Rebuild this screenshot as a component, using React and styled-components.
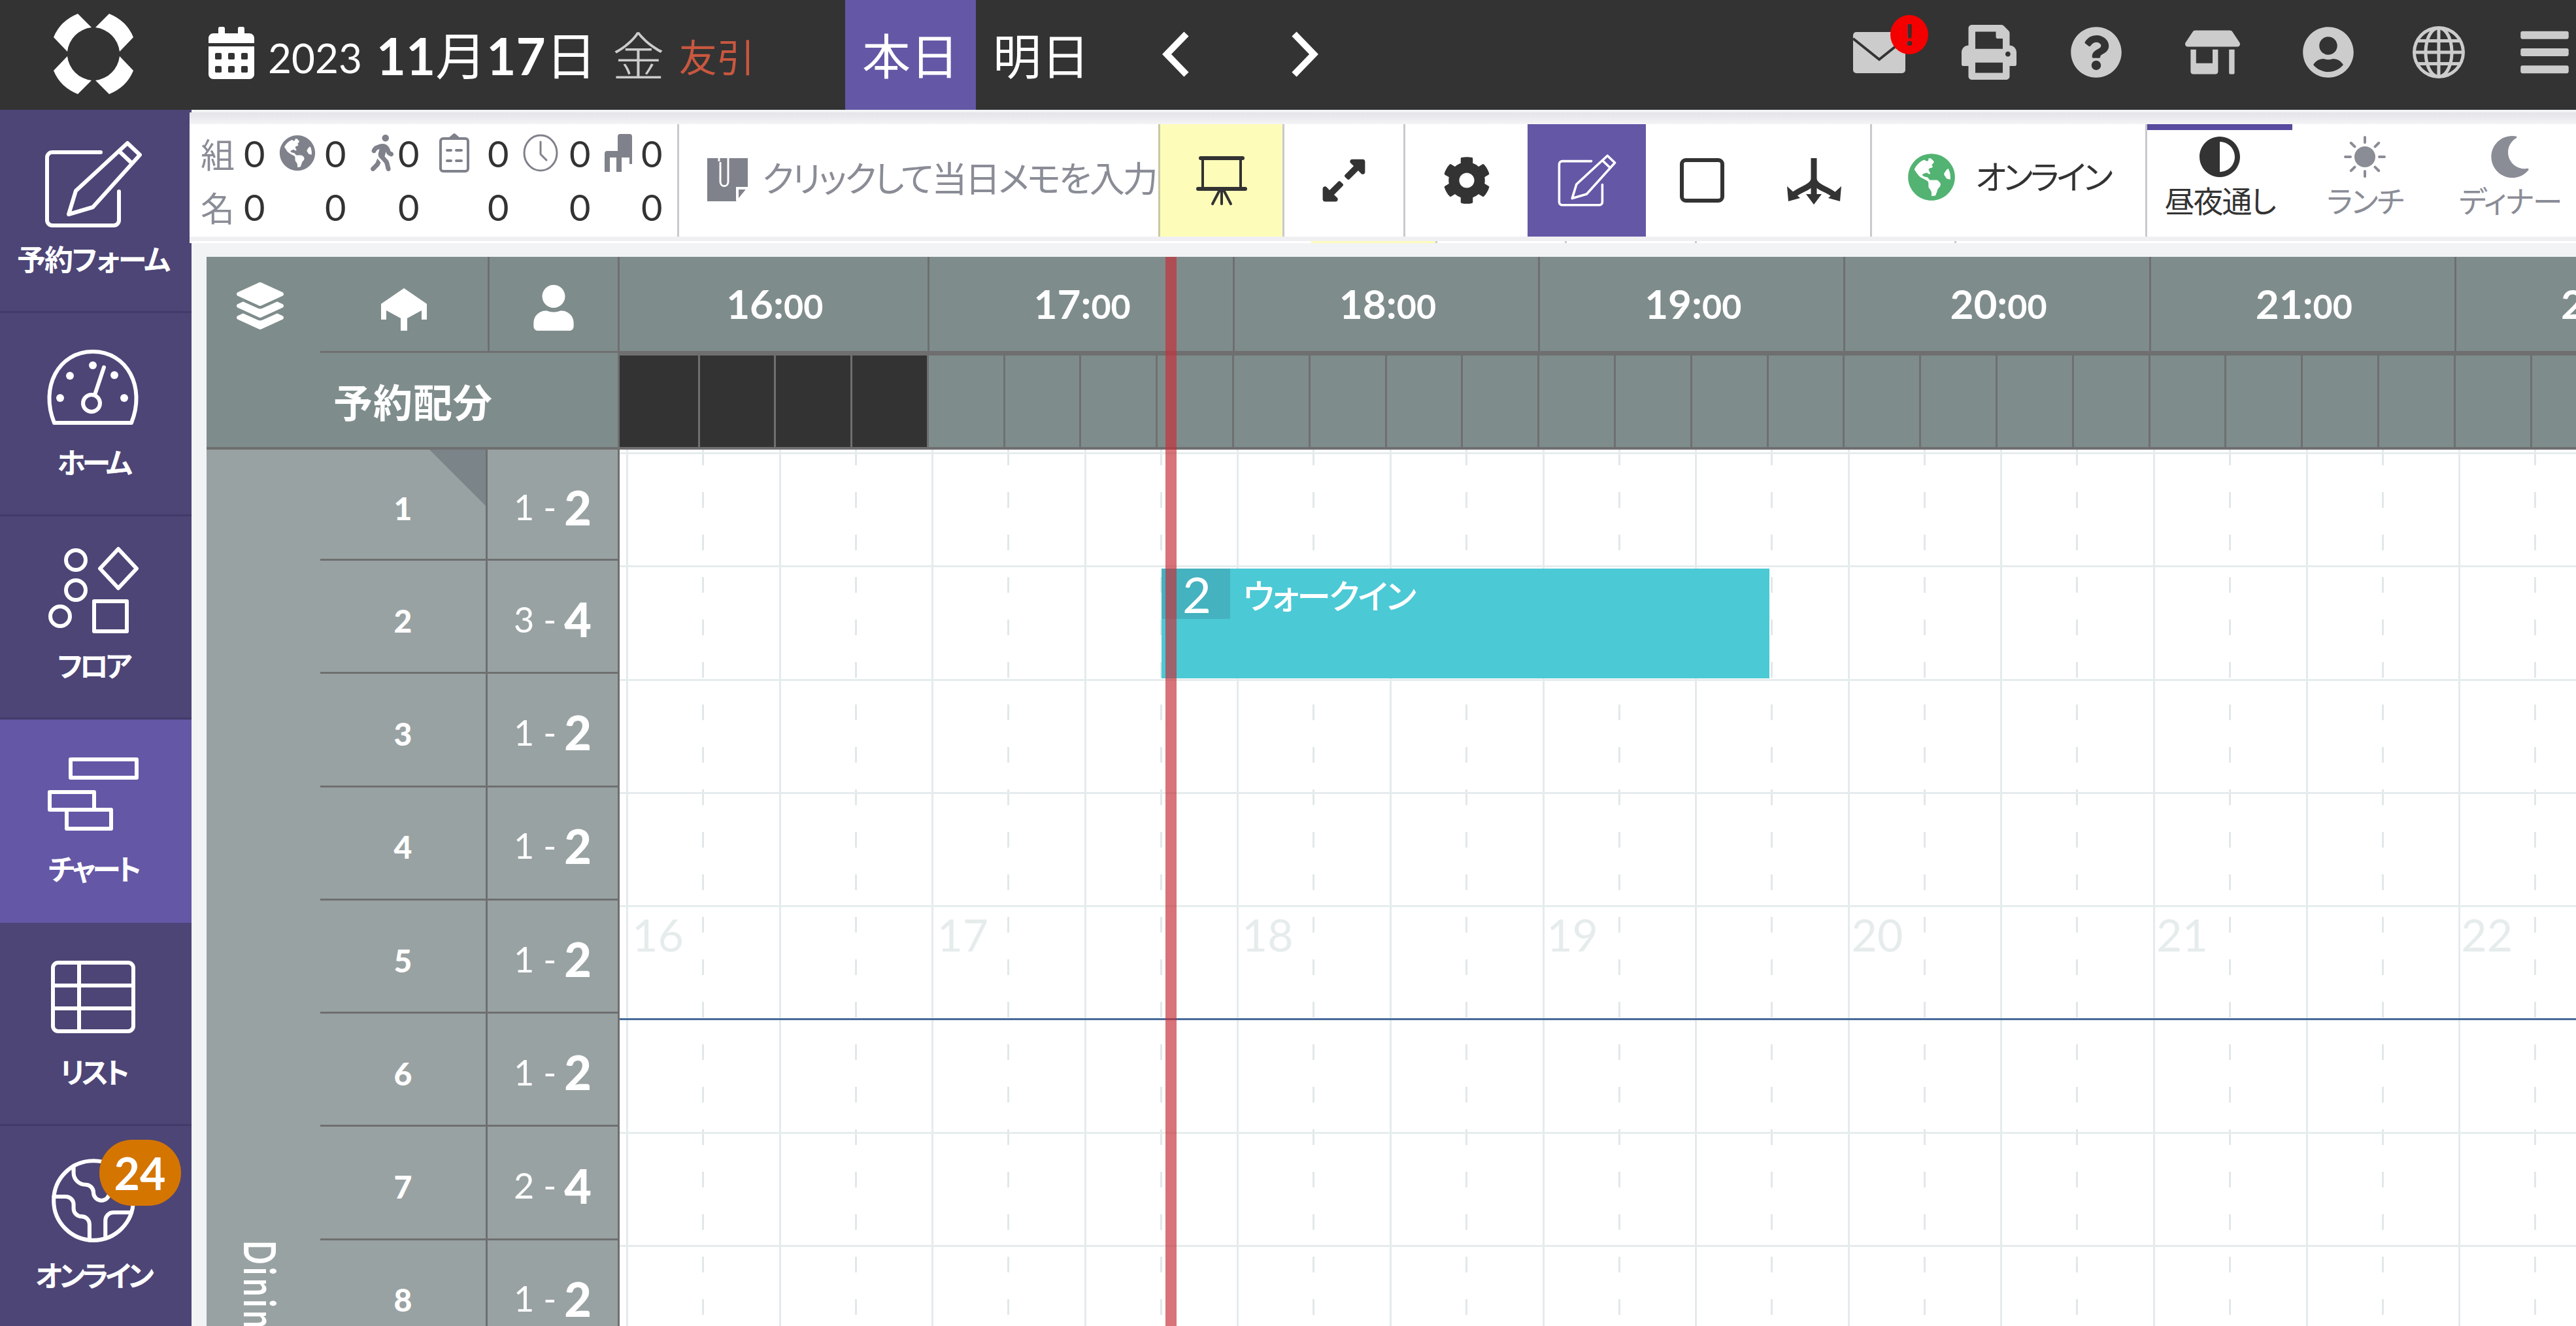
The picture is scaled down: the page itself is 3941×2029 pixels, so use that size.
import React from "react";
import styled, { createGlobalStyle } from "styled-components";
import {
  FaCalendarAlt, FaPrint, FaQuestionCircle, FaStoreAlt, FaUserCircle, FaBars,
  FaGlobeAmericas, FaWalking, FaExpandAlt, FaCog,
  FaAdjust, FaMoon, FaLayerGroup, FaUser,
} from "react-icons/fa";
import { BsGlobe, BsSunFill } from "react-icons/bs";
import { Earth } from "lucide-react";

const GlobalStyle = createGlobalStyle`
  html, body { margin: 0; padding: 0; background: #f2f3f5; }
  * { box-sizing: border-box; }
  body { font-family: "Lato", "Noto Sans CJK JP", sans-serif; font-feature-settings: "palt"; }
`;

const Page = styled.div`
  width: 3941px;
  height: 2029px;
  overflow: hidden;
  display: flex;
  flex-direction: column;
`;

/* top bar */
const TopBar = styled.header`
  height: 168px;
  flex: none;
  background: #333;
  color: #fff;
  display: flex;
  align-items: center;
`;
const Logo = styled.svg`
  width: 122px;
  height: 123px;
  margin: 0 110px 3px 82px;
  flex: none;
`;
const DateBlock = styled.div`
  display: flex;
  align-items: center;
  width: 979px;
  flex: none;
  padding: 0 0 6px 0;
  svg { font-size: 80px; margin-right: 16px; }
`;
const Year = styled.span`
  font-size: 62px;
  margin: 14px 22px 0 0;
`;
const MonthDay = styled.span`
  font-size: 78px;
  margin-right: 24px;
  b { font-weight: 700; }
`;
const Weekday = styled.span`
  font-size: 80px;
  font-weight: 300;
  color: #ccc;
  margin-right: 22px;
`;
const Rokuyo = styled.span`
  font-size: 58px;
  color: #c9573f;
  margin-top: 8px;
`;
const DayTab = styled.div`
  height: 168px;
  width: ${(p) => p.$w}px;
  background: ${(p) => (p.$active ? "#6457a6" : "transparent")};
  font-size: 74px;
  padding-bottom: 6px;
  display: flex;
  align-items: center;
  justify-content: center;
  flex: none;
`;
const Chevron = styled.svg`
  width: 44px;
  height: 70px;
  flex: none;
  margin-left: ${(p) => p.$ml}px;
  margin-bottom: 3px;
`;
const TopIcons = styled.div`
  margin-left: auto;
  padding: 0 8px 8px 0;
  display: flex;
  align-items: center;
  color: #ccc;
`;
const TopIcon = styled.div`
  width: 80px;
  margin-left: ${(p) => p.$gap}px;
  display: flex;
  justify-content: center;
  position: relative;
  font-size: ${(p) => p.$size}px;
  svg { display: block; flex: none; }
`;
const AlertBadge = styled.span`
  position: absolute;
  top: -26px;
  left: 57px;
  width: 58px;
  height: 60px;
  border-radius: 50%;
  background: #f40000;
  color: #333;
  font-size: 46px;
  font-weight: 900;
  line-height: 60px;
  text-align: center;
`;

/* body */
const Body = styled.div`
  flex: 1;
  display: flex;
  min-height: 0;
`;
const Sidebar = styled.nav`
  width: 293px;
  flex: none;
  background: #4d4576;
  color: #fff;
`;
const SideItem = styled.div`
  height: 311px;
  padding: 20px 8px 0 0;
  display: flex;
  flex-direction: column;
  align-items: center;
  background: ${(p) => (p.$active ? "#6457a6" : "transparent")};
  border-bottom: 3px solid ${(p) => (p.$active ? "#6457a6" : "#423b69")};
`;
const SideIconSlot = styled.div`
  height: 187px;
  display: flex;
  align-items: center;
  justify-content: center;
  position: relative;
`;
const SideLabel = styled.div`
  font-size: 44px;
  line-height: 44px;
  font-weight: 700;
  letter-spacing: ${(p) => p.$tracking ?? -5}px;
  white-space: nowrap;
`;
const CountBadge = styled.span`
  position: absolute;
  top: 1px;
  left: 82px;
  width: 125px;
  height: 101px;
  border-radius: 50px;
  background: #d47500;
  color: #fff;
  font-size: 68px;
  font-weight: 700;
  display: flex;
  align-items: center;
  justify-content: center;
`;

const Main = styled.main`
  flex: 1;
  min-width: 0;
  display: flex;
  flex-direction: column;
  padding-top: 4px;
`;

/* toolbar */
const Toolbar = styled.div`
  margin-left: -3px;
  height: 197px;
  flex: none;
  padding: 18px 0 7px;
  background: linear-gradient(to bottom, #e4e4e9, #f4f4f6 18px, #fff 18px, #fff 190px, #f0f0f3 190px);
  display: flex;
  color: #333;
`;
const Stats = styled.div`
  width: 746px;
  flex: none;
  padding: 3px 0 0 17px;
  display: grid;
  grid-template-columns: 66px 54px 70px 63px 49px 63px 74px 54px 71px 54px 56px 55px;
  grid-auto-rows: 82px;
  align-items: center;
  font-size: 56px;
  background: #fff;
`;
const StatLabel = styled.span`
  font-size: 52px;
  color: #8a8c96;
`;
const StatIcon = styled.span`
  font-size: 56px;
  color: #7f818b;
  display: flex;
  svg { display: block; }
`;
const Memo = styled.div`
  width: 736px;
  flex: none;
  border-left: 3px solid #c9c9ce;
  padding: 42px 0 0 43px;
  display: flex;
  gap: 22px;
  color: #8a8c96;
  font-size: 54px;
  line-height: 64px;
  white-space: nowrap;
  letter-spacing: -3px;
  span { margin-top: 10px; }
`;
const ToolButton = styled.div`
  width: ${(p) => p.$w}px;
  flex: none;
  display: flex;
  align-items: center;
  justify-content: center;
  font-size: 74px;
  background: ${(p) => p.$bg || "#fff"};
  color: ${(p) => p.$color || "#333"};
  border-left: ${(p) => (p.$line ? `3px solid ${p.$line}` : "none")};
  svg { display: block; }
`;
const OnlineButton = styled.div`
  width: 421px;
  flex: none;
  border-left: 3px solid #c9c9ce;
  padding: 44px 0 0 54px;
  display: flex;
  gap: 30px;
  font-size: 51px;
  line-height: 64px;
  letter-spacing: -4px;
  white-space: nowrap;
  svg { font-size: 74px; color: #52b372; flex: none; }
  span { margin-top: 5px; }
`;
const MealTab = styled.div`
  width: 222px;
  flex: none;
  display: flex;
  flex-direction: column;
  align-items: center;
  padding-top: 9px;
  gap: 10px;
  font-size: 46px;
  line-height: 52px;
  letter-spacing: -2px;
  white-space: nowrap;
  color: ${(p) => (p.$active ? "#333" : "#8a8c96")};
  border-top: ${(p) => (p.$active ? "9px solid #584a9e" : "9px solid transparent")};
  svg { font-size: 64px; display: block; }
`;
const MealLine = styled.div`
  width: 3px;
  flex: none;
  background: #c9c9ce;
`;
const ToolbarEcho = styled.div`
  margin-left: -3px;
  height: 3px;
  flex: none;
  background: #fff;
  padding-left: 1716px;
  display: flex;
`;
const EchoCell = styled.div`
  flex: 0 0 ${(p) => p.$w}px;
  background: ${(p) => p.$bg || "transparent"};
  border-right: 3px solid #c9c9ce;
`;

/* table */
const TableWrap = styled.section`
  position: relative;
  margin: 21px 0 0 23px;
  flex: 1;
  min-height: 0;
  overflow: hidden;
  display: flex;
  flex-direction: column;
`;
const Head = styled.div`
  height: 295px;
  flex: none;
  display: flex;
  background: #7f8c8c;
  color: #fff;
  border-bottom: 4px solid #6f6f6f;
`;
const HeadLeft = styled.div`
  width: 632px;
  flex: none;
  border-right: 3px solid #6f6f6f;
  display: grid;
  grid-template-columns: 174px 256px 1fr;
  grid-template-rows: 147px 1fr;
`;
const HeadCell = styled.div`
  display: flex;
  align-items: center;
  justify-content: center;
  padding-top: ${(p) => p.$pt || 0}px;
  font-size: ${(p) => p.$size || 62}px;
  border-left: ${(p) => (p.$divider ? "3px solid #6f6f6f" : "none")};
  border-bottom: ${(p) => (p.$under ? "3px solid #6f6f6f" : "none")};
  svg { display: block; }
`;
const LayerCell = styled(HeadCell)`
  grid-row: 1 / span 2;
  align-items: flex-start;
  padding: 39px 10px 0 0;
  font-size: 72px;
`;
const AllotLabel = styled.div`
  grid-column: 2 / span 2;
  display: flex;
  align-items: center;
  padding-left: 20px;
  font-size: 60px;
  font-weight: 700;
  letter-spacing: 1px;
`;
const HeadTimes = styled.div`
  flex: 1;
  min-width: 0;
  display: flex;
  flex-direction: column;
`;
const HourRow = styled.div`
  height: 151px;
  flex: none;
  display: flex;
  border-bottom: 7px solid #6f6f6f;
`;
const HourCell = styled.div`
  flex: 0 0 ${(p) => (p.$first ? 473.5 : 467.3)}px;
  border-right: 3px solid #6f6f6f;
  display: flex;
  align-items: baseline;
  justify-content: center;
  padding: 34px 0 0 4px;
  font-size: 62px;
  font-weight: 700;
  white-space: nowrap;
  small { font-size: 52px; font-weight: 700; }
`;
const SlotRow = styled.div`
  flex: 1;
  display: flex;
`;
const Slot = styled.div`
  flex: 0 0 ${(p) => (p.$first ? 122.5 : 116.8)}px;
  background: ${(p) => (p.$closed ? "#333" : "transparent")};
  border-right: 3px solid #6f6f6f;
`;
const TableBody = styled.div`
  flex: 1;
  display: flex;
  min-height: 0;
`;
const GroupCol = styled.div`
  width: 174px;
  flex: none;
  background: #99a2a2;
  padding: 1210px 0 0 47px;
  color: #fff;
`;
const GroupName = styled.div`
  writing-mode: vertical-rl;
  font-size: 48px;
  font-weight: 700;
  line-height: 50px;
  letter-spacing: 5px;
  white-space: nowrap;
  transform: scaleX(1.4);
  transform-origin: left top;
`;
const HeadRows = styled.div`
  width: 458px;
  flex: none;
  border-right: 3px solid #6f6f6f;
  background: #99a2a2;
  color: #fff;
`;
const TableRow = styled.div`
  height: ${(p) => (p.$first ? 170 : 173.3)}px;
  display: flex;
  border-bottom: 3px solid #6f6f6f;
`;
const TableNo = styled.div`
  position: relative;
  width: 256px;
  flex: none;
  border-right: 3px solid #6f6f6f;
  display: flex;
  align-items: center;
  justify-content: center;
  padding-top: 12px;
  font-size: 48px;
  font-weight: 900;
  &::after {
    content: "";
    display: ${(p) => (p.$marked ? "block" : "none")};
    position: absolute;
    top: 0;
    right: 0;
    width: 86px;
    height: 86px;
    background: #7b8489;
    clip-path: polygon(0 0, 100% 0, 100% 100%);
  }
`;
const Capacity = styled.div`
  flex: 1;
  display: flex;
  align-items: center;
  justify-content: center;
  padding-top: 8px;
  gap: 12px;
  font-size: 54px;
  b { font-size: 72px; font-weight: 900; }
`;

const TimeGrid = styled.div`
  position: relative;
  flex: 1;
  min-width: 0;
  background: #fff;
  padding-top: 4px;
  overflow: hidden;
`;
const GridColumns = styled.div`
  position: absolute;
  inset: 0;
  padding-left: 10px;
  display: flex;
`;
const GridColumn = styled.div`
  position: relative;
  flex: 0 0 233.6px;
  border-left: 3px solid #e4ebed;
  &::after {
    content: "";
    position: absolute;
    top: 0;
    bottom: 0;
    left: 113px;
    width: 3px;
    background: repeating-linear-gradient(to bottom, #e1e8ea 0 24px, transparent 24px 65px);
  }
`;
const GridRow = styled.div`
  position: relative;
  height: 173.3px;
  border-top: 3px solid ${(p) => (p.$accent ? "#476a9c" : "#e6eced")};
`;
const Watermarks = styled.div`
  position: absolute;
  top: 702px;
  left: 19px;
  display: flex;
  color: #e6ecec;
  font-size: 68px;
  line-height: 80px;
`;
const Watermark = styled.span`
  flex: 0 0 466.4px;
`;
const Booking = styled.div`
  position: absolute;
  top: 182px;
  left: 829px;
  width: 930px;
  height: 168px;
  background: #4bc9d5;
  color: #fff;
  display: flex;
  align-items: flex-start;
`;
const PartySize = styled.div`
  width: 105px;
  height: 77px;
  flex: none;
  background: #44b2bf;
  font-size: 76px;
  font-weight: 400;
  line-height: 77px;
  padding-left: 32px;
`;
const GuestName = styled.div`
  font-size: 52px;
  font-weight: 500;
  line-height: 84px;
  margin-left: 20px;
  letter-spacing: -2.5px;
`;
const NowLine = styled.div`
  position: absolute;
  top: 0;
  bottom: 0;
  left: 1467px;
  width: 17px;
  background: rgba(196, 48, 58, 0.68);
`;

/* drawn icons */
const Line = styled.svg`
  fill: none;
  stroke: currentColor;
  stroke-width: ${(p) => p.$sw || 6}px;
  stroke-linejoin: round;
  stroke-linecap: round;
  display: block;
  overflow: visible;
`;

const EditIcon = ({ w, h, sw }) => (
  <Line $sw={sw} width={w} height={h} viewBox="0 0 146 130">
    <path d="M84 16H10a8 8 0 0 0-8 8v96a8 8 0 0 0 8 8h94a8 8 0 0 0 8-8V76" />
    <path d="M125 2l19 18-72 80-37 11 11-36z" />
    <path d="M113 15l19 18" />
  </Line>
);
const GaugeIcon = () => (
  <Line width="147" height="115" viewBox="0 0 147 115">
    <path d="M14 112C-8 58 20 3 73 3c53 0 81 55 59 109z" />
    <circle cx="71" cy="82" r="13" />
    <path d="M76 69L90 27" />
    {[[23, 74], [38, 40], [73, 24], [106, 39], [121, 74]].map(([cx, cy]) => (
      <circle key={cx} cx={cx} cy={cy} r="6" fill="currentColor" stroke="none" />
    ))}
  </Line>
);
const FloorIcon = () => (
  <Line width="137" height="131" viewBox="0 0 137 131">
    <circle cx="42" cy="19" r="15" />
    <circle cx="42" cy="65" r="15" />
    <circle cx="18" cy="105" r="15" />
    <path d="M107 2l28 30-28 30-28-30z" />
    <rect x="70" y="82" width="50" height="46" />
  </Line>
);
const ChartIcon = () => (
  <Line width="137" height="110" viewBox="0 0 137 110">
    <rect x="34" y="2" width="101" height="28" />
    <rect x="2" y="52" width="68" height="27" />
    <rect x="28" y="79" width="68" height="29" />
  </Line>
);
const ListIcon = () => (
  <Line width="129" height="111" viewBox="0 0 129 111">
    <rect x="3" y="3" width="123" height="105" rx="8" />
    <path d="M3 38h123M3 73h123M43 3v105" />
  </Line>
);
const ChartBoardIcon = () => (
  <Line $sw={4} width="76" height="75" viewBox="0 0 76 75">
    <path d="M6 3h64" strokeWidth="6" />
    <path d="M9 3v46M67 3v46" />
    <path d="M2 50h72" strokeWidth="6" />
    <path d="M36 50L24 73M38 50v23M40 50l12 23" />
  </Line>
);
const SplitIcon = () => (
  <Line $sw={9} width="83" height="75" viewBox="0 0 83 75">
    <path d="M41 3v56" strokeLinecap="butt" />
    <path d="M41 36C38 48 20 50 9 60M41 36c3 12 21 14 32 24" />
    <path d="M29 58h24L41 74z" fill="currentColor" stroke="none" />
    <path d="M0 46l2 23 18-5zM83 46l-2 23-18-5z" fill="currentColor" stroke="none" />
  </Line>
);
const ClipboardIcon = () => (
  <Line $sw={4} width="46" height="60" viewBox="0 0 46 60">
    <rect x="2" y="8" width="42" height="50" rx="4" />
    <path d="M16 8l7-6 7 6z" fill="currentColor" />
    <path d="M12 26h6M26 26h8M12 42h6M26 42h8" />
  </Line>
);
const ClockIcon = () => (
  <Line $sw={3} width="54" height="58" viewBox="0 0 54 58">
    <ellipse cx="27" cy="29" rx="25" ry="27" />
    <path d="M27 12v19l9 9" />
  </Line>
);
const ChairIcon = () => (
  <svg width="44" height="58" viewBox="0 0 44 58" fill="currentColor">
    <path d="M20 4a4 4 0 0 1 4-4h14a4 4 0 0 1 4 4v42h-4V36H26v22h-8V36H8v22H0V30a4 4 0 0 1 4-4h16z" />
  </svg>
);
const MemoIcon = () => (
  <svg width="62" height="76" viewBox="0 0 62 76" style={{ flex: "none" }}>
    <path d="M0 10h62v44L44 76H0z" fill="#7f818b" />
    <path d="M46 75V56h16" fill="none" stroke="#fff" strokeWidth="4" />
    <path d="M18 15V8c0-8 14-8 14 0v38c0 9-12 9-12 0V16" fill="none" stroke="#fff" strokeWidth="3" />
  </svg>
);
const HeadTableIcon = () => (
  <svg width="70" height="65" viewBox="0 0 70 65" fill="#fff">
    <path d="M35 0l35 24v24h-8V34L40 46v19H30V46L8 34v14H0V24z" />
  </svg>
);
const MailIcon = () => (
  <svg width="80" height="63" viewBox="0 0 80 63">
    <rect width="80" height="63" rx="5" fill="currentColor" />
    <path d="M0 10l40 32 40-32" fill="none" stroke="#333" strokeWidth="4" />
  </svg>
);

const hours = [16, 17, 18, 19, 20, 21, 22];
const slots = Array.from({ length: 26 }, (_, i) => i);
const halfHours = Array.from({ length: 14 }, (_, i) => i);
const tables = [
  [1, 1, 2], [2, 3, 4], [3, 1, 2], [4, 1, 2],
  [5, 1, 2], [6, 1, 2], [7, 2, 4], [8, 1, 2],
];
const statIcons = [
  <FaGlobeAmericas key="g" />,
  <FaWalking key="w" />,
  <ClipboardIcon key="c" />,
  <ClockIcon key="r" />,
  <ChairIcon key="s" />,
];

function StatRow({ label, withIcons }) {
  return (
    <>
      <StatLabel>{label}</StatLabel>
      <span>0</span>
      {statIcons.map((icon, i) => (
        <React.Fragment key={i}>
          <StatIcon>{withIcons ? icon : null}</StatIcon>
          <span>0</span>
        </React.Fragment>
      ))}
    </>
  );
}

export default function App() {
  return (
    <Page>
      <GlobalStyle />
      <TopBar>
        <Logo viewBox="0 0 122 123" fill="#fff">
          <path d="M0 36Q10 11 37 0L58 21A42 42 0 0 0 21 58Z" />
          <path d="M122 36Q112 11 85 0L64 21A42 42 0 0 1 101 58Z" />
          <path d="M0 87Q10 112 37 123L58 102A42 42 0 0 1 21 65Z" />
          <path d="M122 87Q112 112 85 123L64 102A42 42 0 0 0 101 65Z" />
        </Logo>
        <DateBlock>
          <FaCalendarAlt />
          <Year>2023</Year>
          <MonthDay><b>11</b>月<b>17</b>日</MonthDay>
          <Weekday>金</Weekday>
          <Rokuyo>友引</Rokuyo>
        </DateBlock>
        <DayTab $w={200} $active>本日</DayTab>
        <DayTab $w={200}>明日</DayTab>
        <Chevron $ml={84} viewBox="0 0 44 70" fill="none" stroke="#fff" strokeWidth="10"><path d="M38 4L8 35l30 31" /></Chevron>
        <Chevron $ml={153} viewBox="0 0 44 70" fill="none" stroke="#fff" strokeWidth="10"><path d="M6 4l30 31L6 66" /></Chevron>
        <TopIcons>
          <TopIcon $gap={0} $size={80}><MailIcon /><AlertBadge>!</AlertBadge></TopIcon>
          <TopIcon $gap={88} $size={84}><FaPrint /></TopIcon>
          <TopIcon $gap={84} $size={80}><FaQuestionCircle /></TopIcon>
          <TopIcon $gap={98} $size={84}><FaStoreAlt /></TopIcon>
          <TopIcon $gap={97} $size={80}><FaUserCircle /></TopIcon>
          <TopIcon $gap={89} $size={80}><BsGlobe /></TopIcon>
          <TopIcon $gap={82} $size={84}><FaBars /></TopIcon>
        </TopIcons>
      </TopBar>
      <Body>
        <Sidebar>
          <SideItem>
            <SideIconSlot><EditIcon w={146} h={130} /></SideIconSlot>
            <SideLabel $tracking={-2}>予約フォーム</SideLabel>
          </SideItem>
          <SideItem>
            <SideIconSlot><GaugeIcon /></SideIconSlot>
            <SideLabel>ホーム</SideLabel>
          </SideItem>
          <SideItem>
            <SideIconSlot><FloorIcon /></SideIconSlot>
            <SideLabel>フロア</SideLabel>
          </SideItem>
          <SideItem $active>
            <SideIconSlot><ChartIcon /></SideIconSlot>
            <SideLabel>チャート</SideLabel>
          </SideItem>
          <SideItem>
            <SideIconSlot><ListIcon /></SideIconSlot>
            <SideLabel>リスト</SideLabel>
          </SideItem>
          <SideItem>
            <SideIconSlot>
              <Earth size={146} strokeWidth={1} />
              <CountBadge>24</CountBadge>
            </SideIconSlot>
            <SideLabel>オンライン</SideLabel>
          </SideItem>
        </Sidebar>
        <Main>
          <Toolbar>
            <Stats>
              <StatRow label="組" withIcons />
              <StatRow label="名" />
            </Stats>
            <Memo><MemoIcon /><span>クリックして当日メモを入力</span></Memo>
            <ToolButton $w={190} $bg="#fdfdb9" $line="#c9c9a4"><ChartBoardIcon /></ToolButton>
            <ToolButton $w={185} $line="#c9c9ce"><FaExpandAlt /></ToolButton>
            <ToolButton $w={190} $line="#c9c9ce"><FaCog /></ToolButton>
            <ToolButton $w={181} $bg="#6457a6" $color="#fff"><EditIcon w={88} h={78} sw={6} /></ToolButton>
            <ToolButton $w={172}>
              <Line $sw={6} width="68" height="68" viewBox="0 0 68 68"><rect x="3" y="3" width="62" height="62" rx="6" /></Line>
            </ToolButton>
            <ToolButton $w={171}><SplitIcon /></ToolButton>
            <OnlineButton><FaGlobeAmericas /><span>オンライン</span></OnlineButton>
            <MealLine />
            <MealTab $active><FaAdjust />昼夜通し</MealTab>
            <MealTab><BsSunFill />ランチ</MealTab>
            <MealTab><FaMoon />ディナー</MealTab>
          </Toolbar>
          <ToolbarEcho>
            <EchoCell $w={193} $bg="#fdfdb9" />
            <EchoCell $w={198} />
            <EchoCell $w={199} />
            <EchoCell $w={397} />
          </ToolbarEcho>
          <TableWrap>
            <Head>
              <HeadLeft>
                <LayerCell><FaLayerGroup /></LayerCell>
                <HeadCell $under $pt={16}><HeadTableIcon /></HeadCell>
                <HeadCell $under $divider $pt={12} $size={70}><FaUser /></HeadCell>
                <AllotLabel>予約配分</AllotLabel>
              </HeadLeft>
              <HeadTimes>
                <HourRow>
                  {hours.map((h, i) => (
                    <HourCell key={h} $first={i === 0}>{h}:<small>00</small></HourCell>
                  ))}
                </HourRow>
                <SlotRow>
                  {slots.map((i) => (
                    <Slot key={i} $first={i === 0} $closed={i < 4} />
                  ))}
                </SlotRow>
              </HeadTimes>
            </Head>
            <TableBody>
              <GroupCol><GroupName>Dining</GroupName></GroupCol>
              <HeadRows>
                {tables.map(([no, min, max], i) => (
                  <TableRow key={no} $first={i === 0}>
                    <TableNo $marked={i === 0}>{no}</TableNo>
                    <Capacity>{min} - <b>{max}</b></Capacity>
                  </TableRow>
                ))}
              </HeadRows>
              <TimeGrid>
                <GridColumns>
                  {halfHours.map((i) => <GridColumn key={i} />)}
                </GridColumns>
                {tables.map(([no], i) => (
                  <GridRow key={no} $accent={i === 5} />
                ))}
                <Watermarks>
                  {hours.map((h) => <Watermark key={h}>{h}</Watermark>)}
                </Watermarks>
                <Booking>
                  <PartySize>2</PartySize>
                  <GuestName>ウォークイン</GuestName>
                </Booking>
              </TimeGrid>
            </TableBody>
            <NowLine />
          </TableWrap>
        </Main>
      </Body>
    </Page>
  );
}
